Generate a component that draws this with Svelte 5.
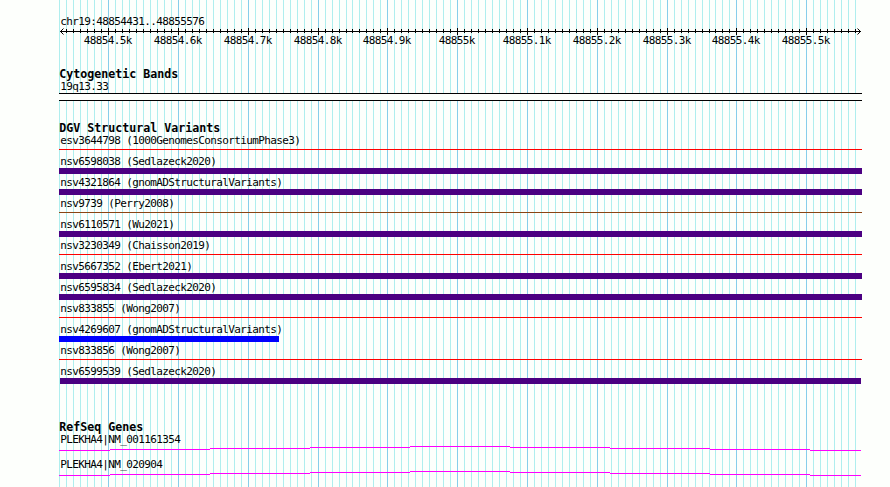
<script>
  const origin = 48854431;
  const scale = 800 / 1146;
  const toX = (pos) => Math.round(60 + (pos - origin) * scale);

  const ticks = [];
  for (let pos = 48854430; pos <= 48855570; pos += 10) {
    ticks.push({ x: toX(pos), major: pos % 100 === 0, label: pos / 1000 + 'k' });
  }
  const majors = ticks.filter((t) => t.major);

  const variants = [
    { name: 'esv3644798 (1000GenomesConsortiumPhase3)', kind: 'thin', color: '#ff0000' },
    { name: 'nsv6598038 (Sedlazeck2020)', kind: 'thick', color: '#4b0082' },
    { name: 'nsv4321864 (gnomADStructuralVariants)', kind: 'thick', color: '#4b0082' },
    { name: 'nsv9739 (Perry2008)', kind: 'thin', color: '#8b4513' },
    { name: 'nsv6110571 (Wu2021)', kind: 'thick', color: '#4b0082' },
    { name: 'nsv3230349 (Chaisson2019)', kind: 'thin', color: '#ff0000' },
    { name: 'nsv5667352 (Ebert2021)', kind: 'thick', color: '#4b0082' },
    { name: 'nsv6595834 (Sedlazeck2020)', kind: 'thick', color: '#4b0082' },
    { name: 'nsv833855 (Wong2007)', kind: 'thin', color: '#ff0000' },
    { name: 'nsv4269607 (gnomADStructuralVariants)', kind: 'thick', color: '#0000ff', width: 220 },
    { name: 'nsv833856 (Wong2007)', kind: 'thin', color: '#ff0000' },
    { name: 'nsv6599539 (Sedlazeck2020)', kind: 'thick', color: '#4b0082', start: 1, width: 801 }
  ];

  const genes = ['PLEKHA4|NM_001161354', 'PLEKHA4|NM_020904'];
  const intron = [
    [0, 51, 4], [51, 100, 3], [151, 100, 2], [251, 100, 1], [351, 100, 0],
    [451, 100, 1], [551, 100, 2], [651, 100, 3], [751, 51, 4]
  ];
</script>

<main>
  <svg class="grid" width="890" height="487" shape-rendering="crispEdges" aria-hidden="true">
    {#each ticks as t}
      <rect x={t.x} y="0" width="1" height="487" fill={t.major ? '#87ceeb' : '#afeeee'} />
    {/each}
  </svg>

  <div class="tracks">
    <header>
      <div class="label">chr19:48854431..48855576</div>
      <svg class="ruler" viewBox="59 27 803 21" width="803" height="21">
        <g shape-rendering="crispEdges">
          <rect x="60" y="31" width="801" height="1" />
          {#each ticks.slice(1) as t}
            <rect x={t.x} y={t.major ? 28 : 29} width="1" height={t.major ? 7 : 4} />
          {/each}
        </g>
        <path d="M63.5 28.5l-3 3l3 3M857.5 28.5l3 3l-3 3" fill="none" stroke="#000" />
        {#each majors as t}
          <text x={t.x - t.label.length * 3 - 0.3} y="44">{t.label}</text>
        {/each}
      </svg>
    </header>

    <section class="bands">
      <h2>Cytogenetic Bands</h2>
      <div class="label">19q13.33</div>
      <div class="band"></div>
    </section>

    <section class="variants">
      <h2>DGV Structural Variants</h2>
      {#each variants as v}
        <div class="variant">
          <div class="label">{v.name}</div>
          <div
            class={v.kind}
            style:background={v.color}
            style:width="{v.width ?? 803}px"
            style:margin-left="{v.start ?? 0}px"
          ></div>
        </div>
      {/each}
    </section>

    <section class="genes">
      <h2>RefSeq Genes</h2>
      {#each genes as g}
        <div class="gene">
          <div class="label">{g}</div>
          <svg width="803" height="5" shape-rendering="crispEdges">
            {#each intron as [x, w, y]}
              <rect {x} {y} width={w} height="1" fill="#ff00ff" />
            {/each}
          </svg>
        </div>
      {/each}
    </section>
  </div>
</main>

<style>
  :global(body) { background: #fdfffc; }
  main {
    position: relative;
    width: 890px;
    height: 487px;
    overflow: hidden;
    background: #fdfffc;
    color: #000;
    font-family: "DejaVu Sans Mono", monospace;
  }
  .grid { position: absolute; inset: 0; display: block; }
  .tracks {
    position: relative;
    display: flex;
    flex-direction: column;
    width: 803px;
    padding: 16px 0 0 59px;
  }
  svg { display: block; }
  header { height: 53px; }
  .label, .ruler text {
    font-size: 11px;
    letter-spacing: -0.622px;
    white-space: pre;
  }
  .label { height: 11px; line-height: 12px; padding-left: 1.3px; }
  h2 {
    margin: 0;
    height: 12px;
    font-size: 11.65px;
    line-height: 10px;
    font-weight: 700;
    letter-spacing: -0.014px;
    padding-left: 0.3px;
  }
  .bands { height: 54px; }
  .band {
    box-sizing: border-box;
    height: 8px;
    margin-top: 1px;
    border: solid #000;
    border-width: 1px 0;
    background: #fdfffc;
  }
  .variants { height: 299px; }
  .variant { height: 21px; }
  .thin { height: 1px; margin-top: 3px; }
  .thick { height: 6px; margin-top: 1px; }
  .gene { height: 25px; }
  .gene svg { margin-top: 1px; }
</style>
